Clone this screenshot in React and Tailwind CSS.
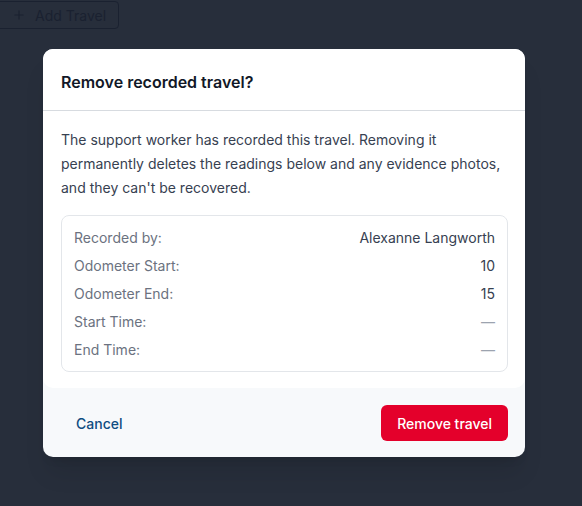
import { Plus } from 'lucide-react';

const ROWS = [
  { label: 'Recorded by:', value: 'Alexanne Langworth' },
  { label: 'Odometer Start:', value: '10' },
  { label: 'Odometer End:', value: '15' },
  { label: 'Start Time:', value: '—', muted: true },
  { label: 'End Time:', value: '—', muted: true },
];

const App = () => {
  return (
    <div
      className="w-[582px] h-[506px] bg-[#272e3b] relative overflow-hidden"
      style={{ fontFamily: 'Inter, "Noto Sans", sans-serif' }}
    >
      {/* Page behind the overlay */}
      <div className="pt-[1px] -ml-[4px]">
        <button className="flex items-center gap-[9px] h-[28px] pl-[15px] pr-[12px] border border-[#1a2130] rounded-[4px] text-[#1a2130] text-[14px]">
          <Plus size={14} strokeWidth={2} />
          Add Travel
        </button>
      </div>

      {/* Modal */}
      <div className="absolute left-[43px] top-[49px] w-[482px] rounded-[10px] bg-[#f7f9fb] shadow-xl overflow-hidden">
        <div className="bg-white pl-[18px] pr-[17px] h-[62px] flex items-center border-b border-[#d7dbe0]">
          <h2 className="text-[16px] font-semibold text-[#111827] pt-[4px]">Remove recorded travel?</h2>
        </div>

        <div className="bg-white rounded-b-[10px] pl-[18px] pr-[17px] pt-[17px] pb-[16px]">
          <p className="text-[14px] leading-[24px] text-[#374151]">
            The support worker has recorded this travel. Removing it permanently deletes the readings below and any evidence photos, and they can't be recovered.
          </p>

          <div className="mt-[15px] border border-[#e3e6ea] rounded-[8px] px-[12px] pt-[7px] pb-[8px] flex flex-col">
            {ROWS.map(row => (
              <div key={row.label} className="flex items-center justify-between h-[28px] text-[14px]">
                <span className="text-[#6b7280]">{row.label}</span>
                <span className={row.muted ? 'text-[#9ca3af]' : 'text-[#374151]'}>{row.value}</span>
              </div>
            ))}
          </div>
        </div>

        <div className="flex items-center justify-between pl-[18px] pr-[17px] pt-[17px] pb-[16px]">
          <button className="px-[15px] h-[36px] text-[14px] font-medium text-[#0f4c81]">Cancel</button>
          <button className="px-[16px] h-[36px] rounded-[6px] bg-[#e4002b] text-white text-[14px] font-medium">
            Remove travel
          </button>
        </div>
      </div>
    </div>
  );
};

export default App;
